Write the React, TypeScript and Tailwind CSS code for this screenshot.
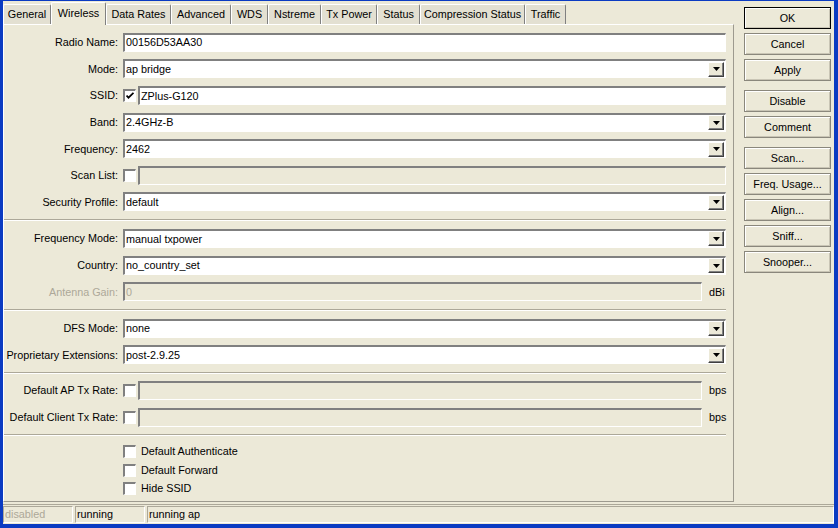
import React from "react";

const FONT = { fontFamily: '"Liberation Sans", Arial, sans-serif' };

const tabs = [
  { name: "General", w: "w-[48px]" },
  { name: "Wireless", w: "w-[55px]", active: true },
  { name: "Data Rates", w: "w-[65px]" },
  { name: "Advanced", w: "w-[60px]" },
  { name: "WDS", w: "w-[37px]" },
  { name: "Nstreme", w: "w-[53px]" },
  { name: "Tx Power", w: "w-[56px]" },
  { name: "Status", w: "w-[43px]" },
  { name: "Compression Status", w: "w-[105px]" },
  { name: "Traffic", w: "w-[41px]" },
];

const sunken =
  "border-t-2 border-l-2 border-b border-r border-t-[#808080] border-l-[#808080] border-b-white border-r-white";

function Label({ text, disabled }: { text: string; disabled?: boolean }) {
  return (
    <div
      className={`w-[119px] shrink-0 pr-[5px] text-right whitespace-nowrap ${
        disabled ? "text-[#aca899]" : "text-black"
      }`}
    >
      {text}
    </div>
  );
}

function Arrow() {
  return (
    <div className="w-[16px] h-[15px] mr-[1px] flex items-center justify-center bg-[#ece9d8] border border-t-white border-l-white border-b-[#404040] border-r-[#404040] shadow-[inset_-1px_-1px_0_#808080]">
      <svg width="7" height="4" viewBox="0 0 7 4">
        <path d="M0 0h7L3.5 4z" fill="#000" />
      </svg>
    </div>
  );
}

function Field({
  value,
  combo,
  disabled,
}: {
  value?: string;
  combo?: boolean;
  disabled?: boolean;
}) {
  return (
    <div
      className={`flex-1 h-[19px] flex items-center ${sunken} ${
        disabled ? "bg-[#ece9d8] text-[#aca899]" : "bg-white"
      }`}
    >
      <div className="flex-1 pl-[1px] leading-none whitespace-nowrap">{value}</div>
      {combo && <Arrow />}
    </div>
  );
}

function Check({ checked }: { checked?: boolean }) {
  return (
    <div
      className={`w-[13px] h-[13px] shrink-0 bg-white flex items-center justify-center ${sunken}`}
    >
      {checked && (
        <svg width="8" height="8" viewBox="0 0 8 8">
          <path d="M0.5 3.5l2 2.2L7.5 0.8" stroke="#000" strokeWidth="1.8" fill="none" />
        </svg>
      )}
    </div>
  );
}

function Row({ children }: { children: React.ReactNode }) {
  return <div className="h-[26.6px] flex items-center pr-[7px]">{children}</div>;
}

function Sep({ h = "h-[10px]" }: { h?: string }) {
  return (
    <div className={`${h} flex items-center pr-[7px]`}>
      <div className="w-full border-t border-t-[#aca899] border-b border-b-white" />
    </div>
  );
}

function Btn({ text, def }: { text: string; def?: boolean }) {
  return (
    <div
      className={`w-[87px] h-[22px] flex items-center justify-center bg-[#ece9d8] border ${
        def ? "border-[#000]" : "border-[#8a877c]"
      } shadow-[inset_1px_1px_0_#ffffff,inset_-1px_-1px_0_#c9c5b5]`}
    >
      {text}
    </div>
  );
}

export default function App() {
  return (
    <div
      style={FONT}
      className="w-[838px] h-[528px] bg-[#ece9d8] border-t border-l-[3px] border-r-[4px] border-b-[4px] border-[#0b3bc2] text-[10.8px] text-black flex flex-col overflow-hidden"
    >
      <div className="flex h-[501px]">
        {/* left: tabs + panel */}
        <div className="w-[731px] flex flex-col">
          <div className="h-[23px] flex items-end">
            {tabs.map((t) =>
              t.active ? (
                <div
                  key={t.name}
                  className={`${t.w} h-[23px] -mb-px relative z-10 flex items-center justify-center bg-[#ece9d8] border-t border-l border-t-white border-l-white border-r border-r-[#808080] rounded-t-[2px]`}
                >
                  <span className="-mt-[2px]">{t.name}</span>
                </div>
              ) : (
                <div
                  key={t.name}
                  className={`${t.w} h-[20px] flex items-center justify-center bg-[#e3e0d2] border-t border-l border-t-white border-l-white border-r border-r-[#808080] rounded-t-[2px]`}
                >
                  {t.name}
                </div>
              )
            )}
          </div>
          <div className="h-[478px] flex flex-col border-t border-l border-t-white border-l-white border-r border-b border-r-[#9d9a8f] border-b-[#9d9a8f] pt-[4px]">
            <Row>
              <Label text="Radio Name:" />
              <Field value="00156D53AA30" />
            </Row>
            <Row>
              <Label text="Mode:" />
              <Field value="ap bridge" combo />
            </Row>
            <Row>
              <Label text="SSID:" />
              <Check checked />
              <div className="w-[2px]" />
              <Field value="ZPlus-G120" />
            </Row>
            <Row>
              <Label text="Band:" />
              <Field value="2.4GHz-B" combo />
            </Row>
            <Row>
              <Label text="Frequency:" />
              <Field value="2462" combo />
            </Row>
            <Row>
              <Label text="Scan List:" />
              <Check />
              <div className="w-[2px]" />
              <Field disabled />
            </Row>
            <Row>
              <Label text="Security Profile:" />
              <Field value="default" combo />
            </Row>
            <Sep />
            <Row>
              <Label text="Frequency Mode:" />
              <Field value="manual txpower" combo />
            </Row>
            <Row>
              <Label text="Country:" />
              <Field value="no_country_set" combo />
            </Row>
            <Row>
              <Label text="Antenna Gain:" disabled />
              <Field value="0" disabled />
              <div className="w-[24px] pl-[7px]">dBi</div>
            </Row>
            <Sep />
            <Row>
              <Label text="DFS Mode:" />
              <Field value="none" combo />
            </Row>
            <Row>
              <Label text="Proprietary Extensions:" />
              <Field value="post-2.9.25" combo />
            </Row>
            <Sep h="h-[9px]" />
            <Row>
              <Label text="Default AP Tx Rate:" />
              <Check />
              <div className="w-[2px]" />
              <Field disabled />
              <div className="w-[24px] pl-[7px]">bps</div>
            </Row>
            <Row>
              <Label text="Default Client Tx Rate:" />
              <Check />
              <div className="w-[2px]" />
              <Field disabled />
              <div className="w-[24px] pl-[7px]">bps</div>
            </Row>
            <Sep h="h-[9px]" />
            <div className="flex flex-col pl-[119px] pt-[3px]">
              {["Default Authenticate", "Default Forward", "Hide SSID"].map((c) => (
                <div key={c} className="h-[18.5px] flex items-center gap-[5px]">
                  <Check />
                  <span>{c}</span>
                </div>
              ))}
            </div>
          </div>
        </div>
        {/* right: buttons */}
        <div className="flex flex-col pl-[10px] pt-[6px]">
          <div className="flex flex-col gap-[4px]">
            <Btn text="OK" def />
            <Btn text="Cancel" />
            <Btn text="Apply" />
          </div>
          <div className="flex flex-col gap-[4px] mt-[9px]">
            <Btn text="Disable" />
            <Btn text="Comment" />
          </div>
          <div className="flex flex-col gap-[4px] mt-[9px]">
            <Btn text="Scan..." />
            <Btn text="Freq. Usage..." />
            <Btn text="Align..." />
            <Btn text="Sniff..." />
            <Btn text="Snooper..." />
          </div>
        </div>
      </div>
      {/* status bar */}
      <div className="flex-1 flex items-end gap-[2px] pb-[1px] border-t border-t-[#aca899] mt-[2px]">
        <div className="w-[70px] h-[17px] flex items-center pl-[1px] text-[#aca899] border border-t-[#aca899] border-l-[#aca899] border-b-white border-r-white">
          disabled
        </div>
        <div className="w-[70px] h-[17px] flex items-center pl-[1px] border border-t-[#aca899] border-l-[#aca899] border-b-white border-r-white">
          running
        </div>
        <div className="flex-1 h-[17px] flex items-center pl-[1px] border border-t-[#aca899] border-l-[#aca899] border-b-white border-r-white">
          running ap
        </div>
      </div>
    </div>
  );
}
